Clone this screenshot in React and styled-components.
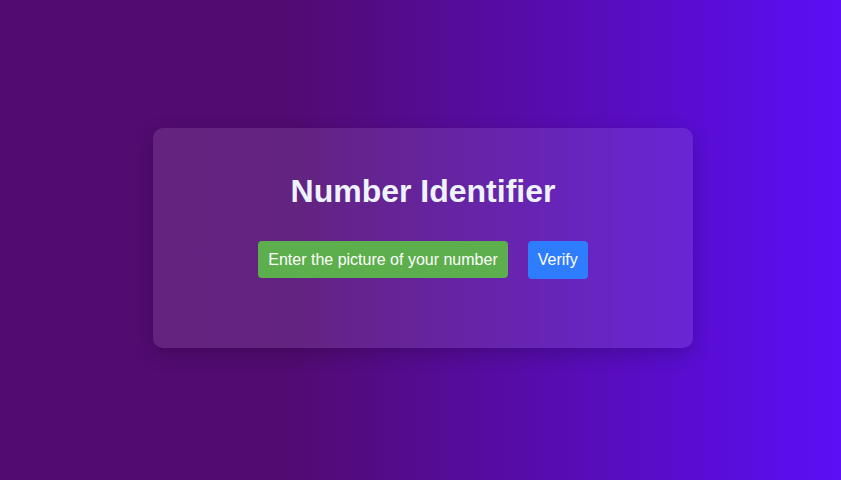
import React from "react";
import styled, { createGlobalStyle } from "styled-components";

const Global = createGlobalStyle`
  html, body { margin: 0; padding: 0; }
  body { font-family: "Liberation Sans", Arial, sans-serif; }
`;

const Page = styled.div`
  min-height: 100vh;
  box-sizing: border-box;
  display: flex;
  align-items: center;
  justify-content: center;
  padding: 0 0 4px 5px;
  background: linear-gradient(to right, #520b70 0%, #520b72 35%, #5c0ef5 100%);
`;

const Card = styled.div`
  width: 540px;
  box-sizing: border-box;
  padding: 45px 20px 69px;
  border-radius: 10px;
  background: rgba(255, 255, 255, 0.1);
  box-shadow: 0 6px 20px rgba(0, 0, 0, 0.2);
  display: flex;
  flex-direction: column;
  align-items: center;
  gap: 31px;
`;

const Title = styled.h1`
  margin: 0;
  font-size: 32px;
  line-height: 37px;
  font-weight: 700;
  color: #eef4ff;
`;

const Row = styled.div`
  display: flex;
  align-items: flex-start;
  gap: 20px;
`;

const Button = styled.button`
  border: none;
  border-radius: 4px;
  font-family: "Liberation Sans", Arial, sans-serif;
  font-size: 16px;
  line-height: 19px;
  padding: 9px 10px ${(p) => (p.$variant === "green" ? "9px" : "10px")};
  color: #ffffff;
  background: ${(p) => (p.$variant === "green" ? "#5caf4c" : "#2e7dff")};
  cursor: pointer;
`;

export default function App() {
  return (
    <>
      <Global />
      <Page>
        <Card>
          <Title>Number Identifier</Title>
          <Row>
            <Button $variant="green">Enter the picture of your number</Button>
            <Button $variant="blue">Verify</Button>
          </Row>
        </Card>
      </Page>
    </>
  );
}
